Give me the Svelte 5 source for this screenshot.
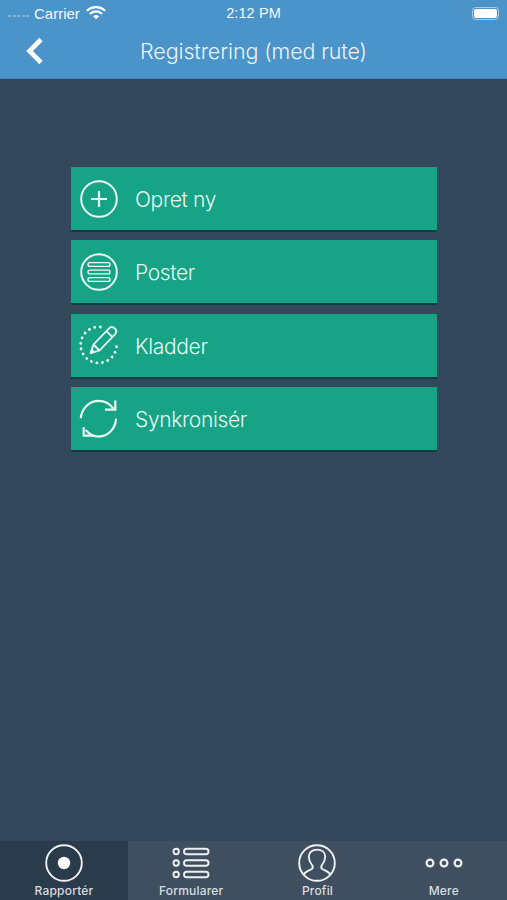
<script lang="ts">
  const buttons = [
    { label: 'Opret ny', icon: 'plus' },
    { label: 'Poster', icon: 'list' },
    { label: 'Kladder', icon: 'draft' },
    { label: 'Synkronisér', icon: 'sync' }
  ];
  const tabs = [
    { label: 'Rapportér', icon: 'report', active: true },
    { label: 'Formularer', icon: 'forms', active: false },
    { label: 'Profil', icon: 'profile', active: false },
    { label: 'Mere', icon: 'more', active: false }
  ];
</script>

<div class="screen">
  <header class="header">
    <div class="status">
      <div class="status-left">
        <span class="dots"><i></i><i></i><i></i><i></i><i></i></span>
        <span class="carrier">Carrier</span>
        <svg class="wifi" width="20" height="15" viewBox="0 0 20 15" fill="none" stroke="#fff" stroke-width="2.2" stroke-linecap="round">
          <path d="M1.5 5.2C6.2 1 13.8 1 18.5 5.2" />
          <path d="M4.6 8.3C7.6 5.7 12.4 5.7 15.4 8.3" />
          <path d="M10 13.6L7.6 11.2C9 10.1 11 10.1 12.4 11.2Z" fill="#fff" stroke-width="1" stroke-linejoin="round" />
        </svg>
      </div>
      <span class="time">2:12 PM</span>
      <div class="battery"><span></span></div>
    </div>
    <div class="nav">
      <svg class="back" width="20" height="28" viewBox="0 0 20 28" fill="none" stroke="#fff" stroke-width="4.6">
        <path d="M17 2.5L5.5 14L17 25.5" />
      </svg>
      <span class="title">Registrering (med rute)</span>
    </div>
  </header>

  <main class="main">
    {#each buttons as b}
      <div class="btn">
        <svg class="btn-icon" width="40" height="40" viewBox="0 0 40 40" fill="none" stroke="#eafaf5" stroke-width="2">
          {#if b.icon === 'plus'}
            <circle cx="20" cy="20" r="17.8" />
            <path d="M20 12V28M12 20H28" stroke-width="2.2" />
          {:else if b.icon === 'list'}
            <circle cx="20" cy="20" r="17.8" />
            <rect x="9" y="10.6" width="22" height="3.8" rx="1.9" stroke-width="1.4" />
            <rect x="9" y="18.1" width="22" height="3.8" rx="1.9" stroke-width="1.4" />
            <rect x="9" y="25.6" width="22" height="3.8" rx="1.9" stroke-width="1.4" />
          {:else if b.icon === 'draft'}
            <path d="M21.3 2A18 18 0 1 0 37.6 21" stroke-width="2.8" stroke-dasharray="0.1 5.5" stroke-linecap="round" />
            <path d="M11.6 28.2L14.5 19.5L29.8 3.6C31.5 1.8 34 1.8 35.8 3.5C37.6 5.2 37.7 7.6 36 9.4L20.5 25.5Z" stroke-width="1.8" stroke-linejoin="round" />
            <path d="M14.5 19.5L20.5 25.5M27.3 6.2L33.4 12" stroke-width="1.8" />
            <path d="M11.6 28.2L12.9 24L16 27Z" fill="#eafaf5" stroke-width="1" />
          {:else}
            <path d="M1.8 19.3C2.4 9.6 10.2 1.8 19.7 1.8C25.6 1.8 30.8 4.6 34.4 9.6" stroke-width="2.2" />
            <path d="M37 19.6C36.6 29.6 29.2 37.6 19.7 37.6C14.6 37.6 10.2 35.2 6.6 31" stroke-width="2.2" />
            <path d="M36.3 1.5V10.6H26" stroke-width="2.2" />
            <path d="M4.7 28.2V36.6H14.7" stroke-width="2.2" />
          {/if}
        </svg>
        <span class="btn-label">{b.label}</span>
      </div>
    {/each}
  </main>

  <nav class="tabbar">
    {#each tabs as t}
      <div class="tab" class:active={t.active}>
        <svg class="tab-icon" width="40" height="38" viewBox="0 0 40 38" fill="none" stroke="#eef1f3" stroke-width="1.9">
          {#if t.icon === 'report'}
            <circle cx="20" cy="19" r="17.8" />
            <circle cx="20" cy="19" r="6.2" fill="#fff" stroke="none" />
          {:else if t.icon === 'forms'}
            <circle cx="5.2" cy="7.5" r="2.7" />
            <circle cx="5.2" cy="19" r="2.7" />
            <circle cx="5.2" cy="30.5" r="2.7" />
            <rect x="13" y="4.7" width="24.5" height="5.6" rx="2.8" />
            <rect x="13" y="16.2" width="24.5" height="5.6" rx="2.8" />
            <rect x="13" y="27.7" width="24.5" height="5.6" rx="2.8" />
          {:else if t.icon === 'profile'}
            <circle cx="20" cy="19" r="17.8" />
            <path d="M6.5 31C8 27.5 12.5 26.5 14.8 25C16.2 24 16 22.5 15 21C13 18.5 11.8 15.5 11.8 12.8C11.8 8.2 15.4 5.6 20 5.6C24.6 5.6 28.2 8.2 28.2 12.8C28.2 15.5 27 18.5 25 21C24 22.5 23.8 24 25.2 25C27.5 26.5 32 27.5 33.5 31" stroke-linejoin="round" />
          {:else}
            <circle cx="6" cy="19" r="3.4" stroke-width="2.2" />
            <circle cx="20" cy="19" r="3.4" stroke-width="2.2" />
            <circle cx="34" cy="19" r="3.4" stroke-width="2.2" />
          {/if}
        </svg>
        <span class="tab-label">{t.label}</span>
      </div>
    {/each}
  </nav>
</div>

<style>
  :global(body) {
    margin: 0;
    background: #34485c;
  }

  .screen {
    width: 507px;
    height: 900px;
    display: flex;
    flex-direction: column;
    overflow: hidden;
    font-family: "Inter", "Liberation Sans", sans-serif;
    color: #fff;
  }

  .header {
    height: 79px;
    flex: none;
    box-sizing: border-box;
    background: #4a94c9;
    border-bottom: 1px solid #4286b8;
  }

  .status {
    height: 26px;
    display: grid;
    grid-template-columns: 1fr auto 1fr;
    align-items: center;
    padding: 0 8px;
    font-family: "Liberation Sans", sans-serif;
    font-size: 14.5px;
    color: #f3f8fc;
  }

  .status-left {
    display: flex;
    align-items: center;
    gap: 6px;
  }

  .dots {
    display: flex;
    gap: 1.5px;
    margin-top: 6px;
    margin-right: -1px;
  }

  .dots i {
    width: 3px;
    height: 2px;
    background: #7fb4dc;
  }

  .carrier {
    font-size: 15px;
  }

  .wifi {
    margin-top: -1px;
  }

  .time {
    font-size: 14.5px;
    letter-spacing: 0.1px;
  }

  .battery {
    justify-self: end;
    width: 27px;
    height: 13px;
    box-sizing: border-box;
    border: 1px solid #a5cbe7;
    border-radius: 3.5px;
    padding: 1px;
    display: flex;
  }

  .battery span {
    flex: 1;
    background: #fff;
    border-radius: 2px;
  }

  .nav {
    height: 52px;
    display: flex;
    align-items: center;
    justify-content: center;
    position: relative;
  }

  .back {
    position: absolute;
    left: 24px;
    top: 11px;
  }

  .title {
    font-size: 21.5px;
    font-weight: 300;
    letter-spacing: -0.13px;
    color: #e9f3fa;
    margin-top: -2px;
  }

  .main {
    flex: 1;
    box-sizing: border-box;
    padding: 88px 70px 0 71px;
    display: flex;
    flex-direction: column;
    gap: 8.4px;
  }

  .btn {
    height: 65px;
    box-sizing: border-box;
    background: #17a385;
    border-bottom: 2px solid #123b3f;
    display: flex;
    align-items: center;
    padding-left: 8px;
    gap: 16px;
  }

  .btn-icon {
    flex: none;
    overflow: visible;
  }

  .btn-label {
    font-size: 21px;
    font-weight: 300;
    letter-spacing: -0.35px;
    color: #e6f8f3;
    margin-top: 2px;
  }

  .tabbar {
    height: 59px;
    flex: none;
    display: grid;
    grid-template-columns: 128px 1fr 1fr 1fr;
    background: #3f4f5f;
  }

  .tab {
    display: flex;
    flex-direction: column;
    align-items: center;
    padding-top: 3px;
    box-sizing: border-box;
    overflow: hidden;
  }

  .tab.active {
    background: #2a3b4c;
  }

  .tab-label {
    font-size: 12px;
    font-weight: 500;
    letter-spacing: 0.2px;
    color: #d8dde1;
    margin-top: 1px;
  }
</style>
